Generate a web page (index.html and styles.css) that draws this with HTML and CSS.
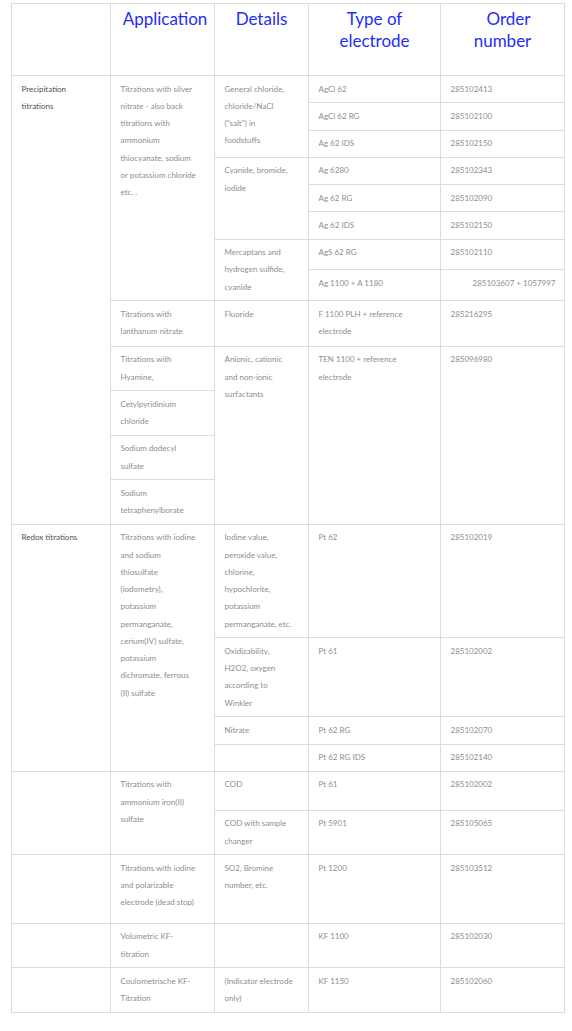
FILE: index.html
```html
<!DOCTYPE html>
<html lang="en">
<head>
<meta charset="utf-8">
<title>Electrodes for titration</title>
<link rel="stylesheet" href="styles.css">
</head>
<body>
<div class="wrap">
<table class="el-table">
  <colgroup>
    <col class="c-cat">
    <col class="c-app">
    <col class="c-det">
    <col class="c-type">
    <col class="c-ord">
  </colgroup>
  <thead>
    <tr class="head">
      <th></th>
      <th><span class="nudge-s">Application</span></th>
      <th>Details</th>
      <th>Type of<br>electrode</th>
      <th><span class="nudge-l">Order</span><br>number</th>
    </tr>
  </thead>
  <tbody>
    <tr>
      <td class="cat" rowspan="13">Precipitation<br>titrations</td>
      <td rowspan="8">Titrations with silver<br>nitrate - also back<br>titrations with<br>ammonium<br>thiocyanate, sodium<br>or potassium chloride<br>etc. .</td>
      <td rowspan="3">General chloride,<br>chloride/NaCl<br>("salt") in<br>foodstuffs</td>
      <td>AgCl 62</td>
      <td>285102413</td>
    </tr>
    <tr><td>AgCl 62 RG</td><td>285102100</td></tr>
    <tr><td>Ag 62 IDS</td><td>285102150</td></tr>
    <tr>
      <td rowspan="3">Cyanide, bromide,<br>iodide</td>
      <td>Ag 6280</td><td>285102343</td>
    </tr>
    <tr><td>Ag 62 RG</td><td>285102090</td></tr>
    <tr><td>Ag 62 IDS</td><td>285102150</td></tr>
    <tr>
      <td rowspan="2">Mercaptans and<br>hydrogen sulfide,<br>cyanide</td>
      <td>AgS 62 RG</td><td>285102110</td>
    </tr>
    <tr><td>Ag 1100 + A 1180</td><td class="right">285103607 + 1057997</td></tr>
    <tr class="r-fl">
      <td>Titrations with<br>lanthanum nitrate</td>
      <td>Fluoride</td>
      <td>F 1100 PLH + reference<br>electrode</td>
      <td>285216295</td>
    </tr>
    <tr>
      <td>Titrations with<br>Hyamine,</td>
      <td rowspan="4">Anionic, cationic<br>and non-ionic<br>surfactants</td>
      <td rowspan="4">TEN 1100 + reference<br>electrode</td>
      <td rowspan="4">285096980</td>
    </tr>
    <tr><td>Cetylpyridinium<br>chloride</td></tr>
    <tr><td>Sodium dodecyl<br>sulfate</td></tr>
    <tr><td>Sodium<br>tetraphenylborate</td></tr>

    <tr>
      <td class="cat" rowspan="4">Redox titrations</td>
      <td rowspan="4">Titrations with iodine<br>and sodium<br>thiosulfate<br>(iodometry),<br>potassium<br>permanganate,<br>cerium(IV) sulfate,<br>potassium<br>dichromate, ferrous<br>(II) sulfate</td>
      <td>Iodine value,<br>peroxide value,<br>chlorine,<br>hypochlorite,<br>potassium<br>permanganate, etc.</td>
      <td>Pt 62</td>
      <td>285102019</td>
    </tr>
    <tr>
      <td>Oxidizability,<br>H2O2, oxygen<br>according to<br>Winkler</td>
      <td>Pt 61</td>
      <td>285102002</td>
    </tr>
    <tr><td>Nitrate</td><td>Pt 62 RG</td><td>285102070</td></tr>
    <tr><td></td><td>Pt 62 RG IDS</td><td>285102140</td></tr>

    <tr class="r-cod">
      <td class="cat" rowspan="2"></td>
      <td rowspan="2">Titrations with<br>ammonium iron(II)<br>sulfate</td>
      <td>COD</td>
      <td>Pt 61</td>
      <td>285102002</td>
    </tr>
    <tr><td>COD with sample<br>changer</td><td>Pt 5901</td><td>285105065</td></tr>
    <tr class="r-ds">
      <td class="cat"></td>
      <td>Titrations with iodine<br>and polarizable<br>electrode (dead stop)</td>
      <td>SO2, Bromine<br>number, etc.</td>
      <td>Pt 1200</td>
      <td>285103512</td>
    </tr>
    <tr class="r-kf">
      <td class="cat"></td>
      <td>Volumetric KF-<br>titration</td>
      <td></td>
      <td>KF 1100</td>
      <td>285102030</td>
    </tr>
    <tr class="r-kf">
      <td class="cat"></td>
      <td>Coulometrische KF-<br>Titration</td>
      <td>(Indicator electrode<br>only)</td>
      <td>KF 1150</td>
      <td>285102060</td>
    </tr>
  </tbody>
</table>
</div>
</body>
</html>
```
FILE: styles.css
```css
html, body {
  margin: 0;
  padding: 0;
  background: #ffffff;
}

body {
  font-family: Lato, "Noto Sans", "Liberation Sans", sans-serif;
}

.wrap {
  padding: 3px 0 0 11px;
}

.el-table {
  border-collapse: collapse;
  table-layout: fixed;
  width: 554px;
}

.c-cat { width: 99px; }
.c-app { width: 104px; }
.c-det { width: 94px; }
.c-type { width: 132px; }
.c-ord { width: 124px; }

.el-table th,
.el-table td {
  border: 1px solid #dcdcdc;
  vertical-align: top;
}

.el-table th {
  font-size: 17px;
  line-height: 22px;
  font-weight: 400;
  color: #1f2ef5;
  text-align: center;
  padding: 3.5px 4px;
}

.head {
  height: 72px;
}

.nudge-s {
  margin-left: 5px;
}

.nudge-l {
  margin-left: 12px;
}

.el-table td {
  font-size: 8px;
  line-height: 17.25px;
  color: #8e8e8e;
  padding: 4.5px 3px 4.5px 9.5px;
  text-align: left;
}

.el-table td.cat {
  color: #4f4f4f;
}

.el-table td.right {
  text-align: right;
  padding-right: 8.5px;
}

.r-fl { height: 45.5px; }
.r-cod { height: 39px; }
.r-ds { height: 68.6px; }
.r-kf { height: 44.4px; }
```
